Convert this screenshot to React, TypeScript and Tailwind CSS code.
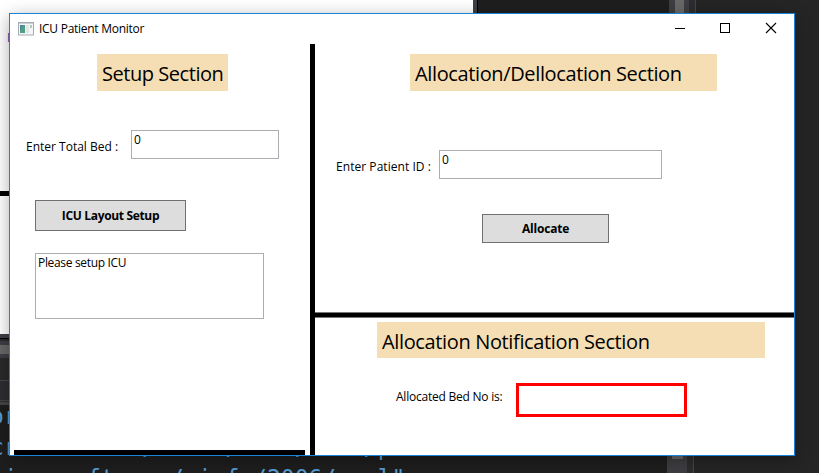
import React from "react";

function Heading({ className, children }: { className: string; children: string }) {
  return (
    <h2 className={`bg-[#f5deb3] pl-[5px] pt-[5px] text-[20px] leading-[30px] whitespace-nowrap ${className}`}>{children}</h2>
  );
}

function TitleBar() {
  return (
    <header className="flex h-[30px] items-center">
      <svg className="ml-2 h-[14px] w-4 shrink-0" viewBox="0 0 16 14">
        <rect x="0.5" y="0.5" width="15" height="12.5" fill="#f4f5f6" stroke="#a9adb3" />
        <path d="M1 1.5h14" stroke="#c9cdd4" />
        <rect x="2" y="3" width="5" height="8" fill="#4f9d82" />
        <path d="M2 3h3L2 8z" fill="#4c83a5" />
        <rect x="8" y="3" width="3" height="8" fill="#e3e5e6" />
        <rect x="12" y="3" width="2" height="3" fill="#a9cfc4" />
      </svg>
      <h1 className="ml-[5px] text-[12px] tracking-[-0.27px] whitespace-nowrap">ICU Patient Monitor</h1>
      <div className="ml-auto flex h-full items-center">
        <svg className="h-[30px] w-[46px]" viewBox="0 0 46 30">
          <path d="M19 14.5h10" stroke="#000" />
        </svg>
        <svg className="h-[30px] w-[46px]" viewBox="0 0 46 30">
          <rect x="18.5" y="9.5" width="9" height="9" fill="none" stroke="#000" />
        </svg>
        <svg className="h-[30px] w-[46px]" viewBox="0 0 46 30">
          <path d="M18 9l10 10M28 9l-10 10" stroke="#000" strokeWidth="1.1" />
        </svg>
      </div>
    </header>
  );
}

function SetupPanel() {
  return (
    <section className="flex w-[300px] shrink-0 flex-col">
      <Heading className="mt-[10px] ml-[87px] h-[37px] w-[131px] tracking-[-0.45px]">Setup Section</Heading>
      <div className="mt-[39px] flex items-start">
        <label className="ml-4 w-[105px] pt-2 text-[12px] leading-[18px] whitespace-nowrap">Enter Total Bed :</label>
        <div className="h-[29px] w-[148px] border border-[#abadb3] pl-[2px] text-[12px] leading-[18px]">0</div>
      </div>
      <button className="mt-[41px] ml-[25px] h-[31px] w-[151px] border border-[#707070] bg-[#ddd] text-[12px] font-bold tracking-[-0.33px]">
        ICU Layout Setup
      </button>
      <div className="mt-[22px] ml-[25px] h-[66px] w-[229px] border border-[#abadb3] pl-[2px] text-[12px] leading-[18px] tracking-[-0.33px]">
        Please setup ICU
      </div>
      <div className="mt-auto ml-1 h-[5px] w-[291px] bg-black" />
    </section>
  );
}

function AllocationPanel() {
  return (
    <section className="flex h-[268px] shrink-0 flex-col">
      <Heading className="mt-[10px] ml-[95px] h-[37px] w-[307px] tracking-[-0.37px]">Allocation/Dellocation Section</Heading>
      <div className="mt-[59px] flex items-start">
        <label className="ml-[21px] w-[103px] pt-2 text-[12px] leading-[18px] tracking-[0.05px] whitespace-nowrap">Enter Patient ID :</label>
        <div className="h-[29px] w-[223px] border border-[#abadb3] pl-[2px] text-[12px] leading-[18px]">0</div>
      </div>
      <button className="mt-[35px] ml-[167px] h-[29px] w-[127px] border border-[#707070] bg-[#ddd] text-[12px] font-bold tracking-[-0.2px]">
        Allocate
      </button>
    </section>
  );
}

function NotificationPanel() {
  return (
    <section className="flex flex-1 flex-col">
      <Heading className="mt-[4px] ml-[62px] h-[36px] w-[388px] tracking-[-0.36px]">Allocation Notification Section</Heading>
      <div className="mt-[25px] flex items-start">
        <span className="ml-[81px] w-[120px] pt-[5px] text-[12px] leading-[18px] tracking-[-0.23px] whitespace-nowrap">
          Allocated Bed No is:
        </span>
        <div className="h-[34px] w-[171px] border-[3px] border-[#f00]" />
      </div>
    </section>
  );
}

function ScrollStrip({ children }: { children?: React.ReactNode }) {
  return (
    <>
      <div className="flex w-5 flex-col items-center bg-[#3e3e42]">{children}</div>
      <div className="w-[6px] bg-[#2d2d30]" />
      <div className="w-px bg-[#46464a]" />
      <div className="flex-1 bg-[#252526]" />
    </>
  );
}

function Backdrop() {
  return (
    <div className="flex h-full flex-col">
      <div className="flex h-[334px]">
        <div className="flex w-[473px] flex-col bg-white">
          <div className="h-[191px] pt-[30px] pl-[7px] text-[12px] leading-4 text-[#2b3f9e]">E</div>
          <div className="h-[5px] bg-black" />
        </div>
        <div className="w-1 bg-[#3e3e46]" />
        <div className="w-px bg-black" />
        <div className="w-[191px] bg-[#1e1e1e]" />
        <ScrollStrip>
          <div className="h-full w-[9px] bg-[#686868]" />
        </ScrollStrip>
      </div>
      <div className="flex h-[139px]">
        <div className="flex w-[667px] flex-col bg-[#1e1e1e]">
          <div className="h-1 bg-[#3e3e46]" />
          <div className="h-px bg-black" />
          <div className="h-[2px] bg-[#2a2a2c]" />
          <div className="h-1 bg-[#3e3e46]" />
          <div className="h-[9px] bg-[#686868]" />
          <div className="h-1 bg-[#3e3e46]" />
          <div className="h-[22px] bg-[#2a2a2b]" />
          <div className="h-px bg-[#46464a]" />
          <div className="h-[19px] bg-[#2d2d32]" />
          <div className="h-px bg-[#46464a]" />
          <div className="h-px bg-[#2d2d30]" />
          <div className="h-[3px] bg-[#464646]" />
          <pre className="-mt-1 -ml-[10px] h-[72px] overflow-hidden font-['DejaVu_Sans_Mono',monospace] text-[23px] leading-[31px] text-[#569cd6]">
            {"or\ncrosoft.com/winfx/2006/xaml/p\nmicrosoft.com/winfx/2006/xaml\""}
          </pre>
        </div>
        <ScrollStrip>
          <div className="mt-[115px] h-[10px] w-[11px] bg-[#686868]" />
        </ScrollStrip>
      </div>
    </div>
  );
}

export default function App() {
  return (
    <div className="relative h-[473px] w-[819px] overflow-hidden font-['Open_Sans','Noto_Sans',sans-serif] text-black">
      <Backdrop />
      <main className="absolute top-[13px] left-[9px] flex h-[443px] w-[786px] flex-col border border-[#1883d7] bg-white shadow-[0_4px_16px_rgba(0,0,0,0.32)]">
        <TitleBar />
        <div className="flex flex-1">
          <SetupPanel />
          <div className="w-[5px] bg-black" />
          <div className="flex flex-1 flex-col">
            <AllocationPanel />
            <div className="h-[6px] border-y border-[#777] bg-black" />
            <NotificationPanel />
          </div>
        </div>
      </main>
    </div>
  );
}
